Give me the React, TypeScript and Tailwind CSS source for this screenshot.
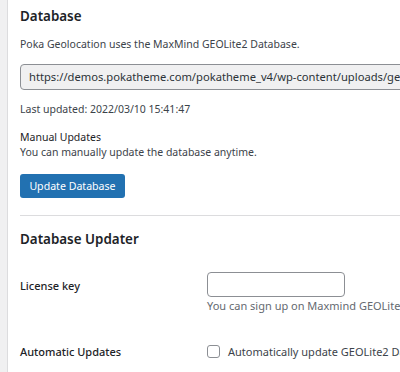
import React from 'react';

export default function App() {
  return (
    <div
      className="w-[400px] h-[372px] overflow-hidden flex bg-[#f0f0f1] text-[#3c434a]"
      style={{ fontFamily: '"Noto Sans", "Open Sans", sans-serif' }}
    >
      <div className="w-[7px] shrink-0" />
      <div className="flex-1 min-w-0 bg-white border-l border-[#dcdcde] pl-[12px] pt-[6px] overflow-hidden">
        <h2 className="text-[13.4px] font-semibold leading-[20px] text-[#1d2327]">Database</h2>
        <p className="text-[10.5px] leading-[15px] mt-[11px]">
          Poka Geolocation uses the MaxMind GEOLite2 Database.
        </p>
        <div className="mt-[12px] h-[26px] w-[420px] rounded-[4px] border border-[#8c8f94] bg-[#f0f0f1] flex items-center pl-[8px] text-[11.2px] text-[#2c3338] whitespace-nowrap overflow-hidden">
          https://demos.pokatheme.com/pokatheme_v4/wp-content/uploads/geolite2/GeoLite2-City.mmdb
        </div>
        <p className="text-[10.5px] leading-[15px] mt-[12px]">Last updated: 2022/03/10 15:41:47</p>
        <p className="text-[10.5px] leading-[15px] mt-[13px] text-[#1d2327]">Manual Updates</p>
        <p className="text-[10.5px] leading-[15px]">You can manually update the database anytime.</p>
        <button className="mt-[14px] h-[24px] w-[105px] rounded-[3px] bg-[#2271b1] text-white text-[10.6px] leading-[24px]">
          Update Database
        </button>
        <div className="mt-[17px] border-t border-[#dcdcde]" />
        <h2 className="text-[13.4px] font-semibold leading-[20px] mt-[13px] text-[#1d2327]">Database Updater</h2>
        <div className="flex mt-[23px]">
          <div className="w-[187px] shrink-0 pt-[6px] text-[11px] font-medium leading-[15px] text-[#1d2327]">License key</div>
          <div className="flex flex-col whitespace-nowrap">
            <div className="h-[25px] w-[138px] rounded-[4px] border border-[#8c8f94] bg-white" />
            <p className="text-[11px] leading-[15px] text-[#646970] mt-[1px]">
              You can sign up on Maxmind GEOLite2 to get a free license key.
            </p>
          </div>
        </div>
        <div className="flex mt-[31px]">
          <div className="w-[187px] shrink-0 text-[11px] font-medium leading-[15px] text-[#1d2327]">Automatic Updates</div>
          <label className="flex items-center gap-[8px] whitespace-nowrap">
            <span className="w-[13px] h-[13px] rounded-[3px] border border-[#8c8f94] bg-white shrink-0" />
            <span className="text-[11px] leading-[15px]">Automatically update GEOLite2 Database</span>
          </label>
        </div>
      </div>
    </div>
  );
}
